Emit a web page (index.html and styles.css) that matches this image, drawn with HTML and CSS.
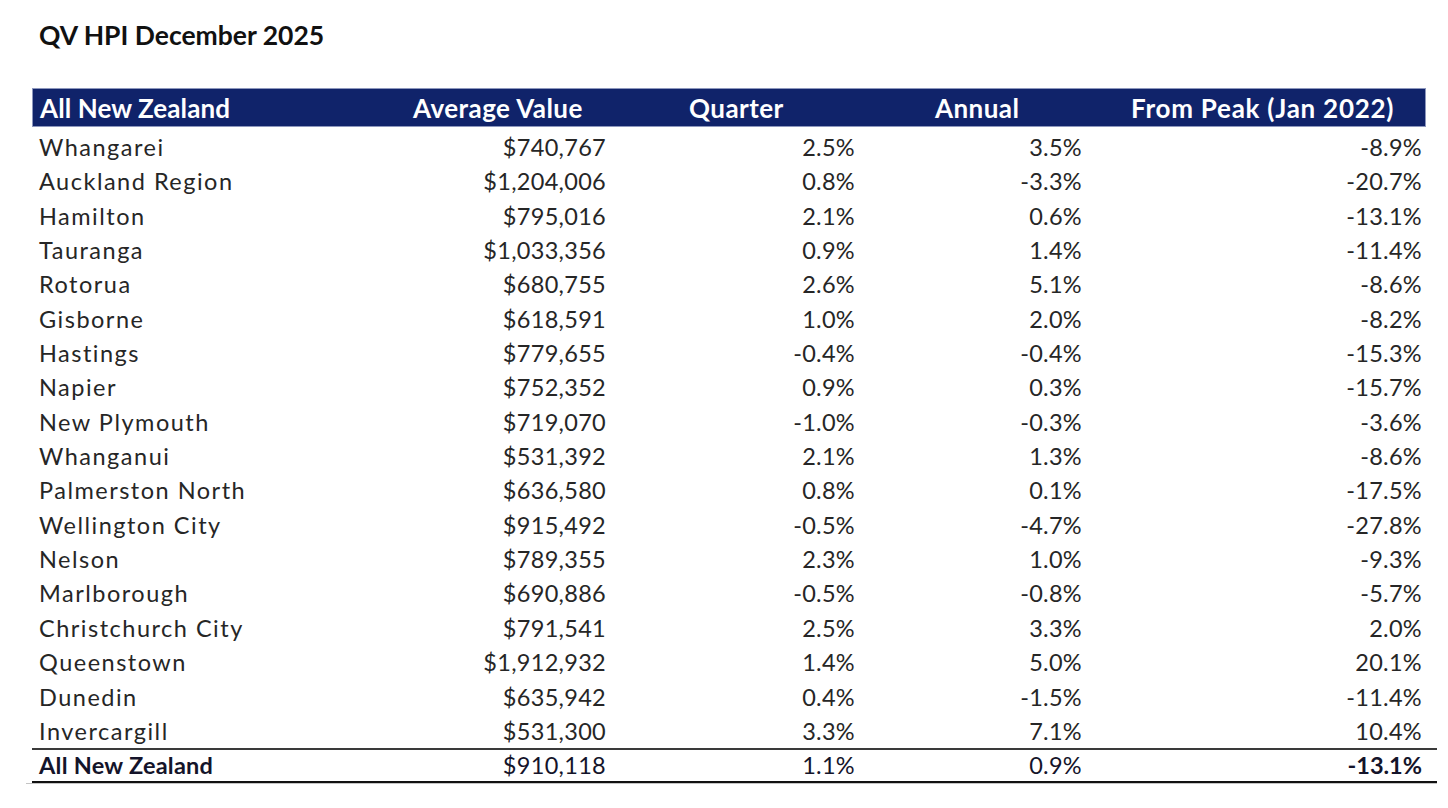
FILE: index.html
```html
<!DOCTYPE html>
<html lang="en">
<head>
<meta charset="utf-8">
<title>QV HPI December 2025</title>
<link rel="stylesheet" href="styles.css">
</head>
<body>
<div class="page">
  <h1 class="title">QV HPI December 2025</h1>
  <table class="hpi">
    <colgroup>
      <col class="c-name"><col class="c-avg"><col class="c-q"><col class="c-a"><col class="c-p"><col class="c-gap">
    </colgroup>
    <thead>
      <tr>
        <th class="h-name">All New Zealand</th>
        <th class="h-avg">Average Value</th>
        <th class="h-q">Quarter</th>
        <th class="h-a">Annual</th>
        <th class="h-p">From Peak (Jan 2022)</th>
        <th class="h-gap"></th>
      </tr>
    </thead>
    <tbody>
      <tr><td class="name">Whangarei</td><td class="num">$740,767</td><td class="num">2.5%</td><td class="num">3.5%</td><td class="num last">-8.9%</td><td></td></tr>
      <tr><td class="name">Auckland Region</td><td class="num">$1,204,006</td><td class="num">0.8%</td><td class="num">-3.3%</td><td class="num last">-20.7%</td><td></td></tr>
      <tr><td class="name">Hamilton</td><td class="num">$795,016</td><td class="num">2.1%</td><td class="num">0.6%</td><td class="num last">-13.1%</td><td></td></tr>
      <tr><td class="name">Tauranga</td><td class="num">$1,033,356</td><td class="num">0.9%</td><td class="num">1.4%</td><td class="num last">-11.4%</td><td></td></tr>
      <tr><td class="name">Rotorua</td><td class="num">$680,755</td><td class="num">2.6%</td><td class="num">5.1%</td><td class="num last">-8.6%</td><td></td></tr>
      <tr><td class="name">Gisborne</td><td class="num">$618,591</td><td class="num">1.0%</td><td class="num">2.0%</td><td class="num last">-8.2%</td><td></td></tr>
      <tr><td class="name">Hastings</td><td class="num">$779,655</td><td class="num">-0.4%</td><td class="num">-0.4%</td><td class="num last">-15.3%</td><td></td></tr>
      <tr><td class="name">Napier</td><td class="num">$752,352</td><td class="num">0.9%</td><td class="num">0.3%</td><td class="num last">-15.7%</td><td></td></tr>
      <tr><td class="name">New Plymouth</td><td class="num">$719,070</td><td class="num">-1.0%</td><td class="num">-0.3%</td><td class="num last">-3.6%</td><td></td></tr>
      <tr><td class="name">Whanganui</td><td class="num">$531,392</td><td class="num">2.1%</td><td class="num">1.3%</td><td class="num last">-8.6%</td><td></td></tr>
      <tr><td class="name">Palmerston North</td><td class="num">$636,580</td><td class="num">0.8%</td><td class="num">0.1%</td><td class="num last">-17.5%</td><td></td></tr>
      <tr><td class="name">Wellington City</td><td class="num">$915,492</td><td class="num">-0.5%</td><td class="num">-4.7%</td><td class="num last">-27.8%</td><td></td></tr>
      <tr><td class="name">Nelson</td><td class="num">$789,355</td><td class="num">2.3%</td><td class="num">1.0%</td><td class="num last">-9.3%</td><td></td></tr>
      <tr><td class="name">Marlborough</td><td class="num">$690,886</td><td class="num">-0.5%</td><td class="num">-0.8%</td><td class="num last">-5.7%</td><td></td></tr>
      <tr><td class="name">Christchurch City</td><td class="num">$791,541</td><td class="num">2.5%</td><td class="num">3.3%</td><td class="num last">2.0%</td><td></td></tr>
      <tr><td class="name">Queenstown</td><td class="num">$1,912,932</td><td class="num">1.4%</td><td class="num">5.0%</td><td class="num last">20.1%</td><td></td></tr>
      <tr><td class="name">Dunedin</td><td class="num">$635,942</td><td class="num">0.4%</td><td class="num">-1.5%</td><td class="num last">-11.4%</td><td></td></tr>
      <tr><td class="name">Invercargill</td><td class="num">$531,300</td><td class="num">3.3%</td><td class="num">7.1%</td><td class="num last">10.4%</td><td></td></tr>
    </tbody>
    <tfoot>
      <tr class="total"><td class="name">All New Zealand</td><td class="num">$910,118</td><td class="num">1.1%</td><td class="num">0.9%</td><td class="num last strong">-13.1%</td><td></td></tr>
    </tfoot>
  </table>
  <div class="shadow-rule"></div>
</div>
</body>
</html>
```

FILE: styles.css
```css
html, body {
  margin: 0;
  padding: 0;
  background: #ffffff;
}

.page {
  padding: 20px 0 0 32px;
  font-family: Lato, "Open Sans", sans-serif;
  color: #262626;
}

.title {
  margin: 0 0 37px 0;
  padding-left: 7px;
  font-size: 26.5px;
  line-height: 31px;
  font-weight: 700;
  color: #111111;
}

.hpi {
  width: 1405px;
  table-layout: fixed;
  border-collapse: separate;
  border-spacing: 0;
}

.c-name { width: 374px; }
.c-avg { width: 207px; }
.c-q { width: 249px; }
.c-a { width: 227px; }
.c-p { width: 337px; }
.c-gap { width: 11px; }

.hpi th {
  background: #10236a;
  color: #ffffff;
  font-size: 26px;
  font-weight: 700;
  letter-spacing: 0.45px;
  text-align: left;
  height: 35px;
  line-height: 35px;
  padding: 2px 0 0 0;
  border-top: 1px solid #8d97bd;
  border-bottom: 1px solid #8d97bd;
  white-space: nowrap;
}

.hpi th.h-name { padding-left: 7px; border-left: 1px solid #8d97bd; letter-spacing: 0.1px; }
.hpi th.h-avg { padding-left: 7px; }
.hpi th.h-q { padding-left: 76px; }
.hpi th.h-a { padding-left: 73px; }
.hpi th.h-p { padding-left: 42px; border-right: 1px solid #8d97bd; letter-spacing: 0.75px; }
.hpi th.h-gap { background: transparent; border: none; }

.hpi td {
  font-size: 23.5px;
  line-height: 34.35px;
  height: 34.35px;
  padding: 0;
  white-space: nowrap;
}

.hpi tbody tr:first-child td {
  padding-top: 3px;
}

.hpi td.name {
  padding-left: 7px;
  text-align: left;
  letter-spacing: 1.5px;
}

.hpi td.num {
  text-align: right;
  padding-right: 7px;
  letter-spacing: 0.3px;
}

.hpi td.num.last {
  padding-right: 4px;
}

.hpi .total td {
  font-weight: 700;
  color: #14142a;
  border-top: 2px solid #3a3a3a;
  border-bottom: 2px solid #111111;
  line-height: 31px;
  height: 31px;
}

.hpi .total td.name {
  letter-spacing: 0.25px;
}

.hpi .total td.num {
  font-weight: 400;
}

.hpi .total td.num.strong {
  font-weight: 700;
  letter-spacing: 0;
}

.shadow-rule {
  width: 1411px;
  height: 1px;
  margin-left: -6px;
  background: #c4c4c4;
}
```
